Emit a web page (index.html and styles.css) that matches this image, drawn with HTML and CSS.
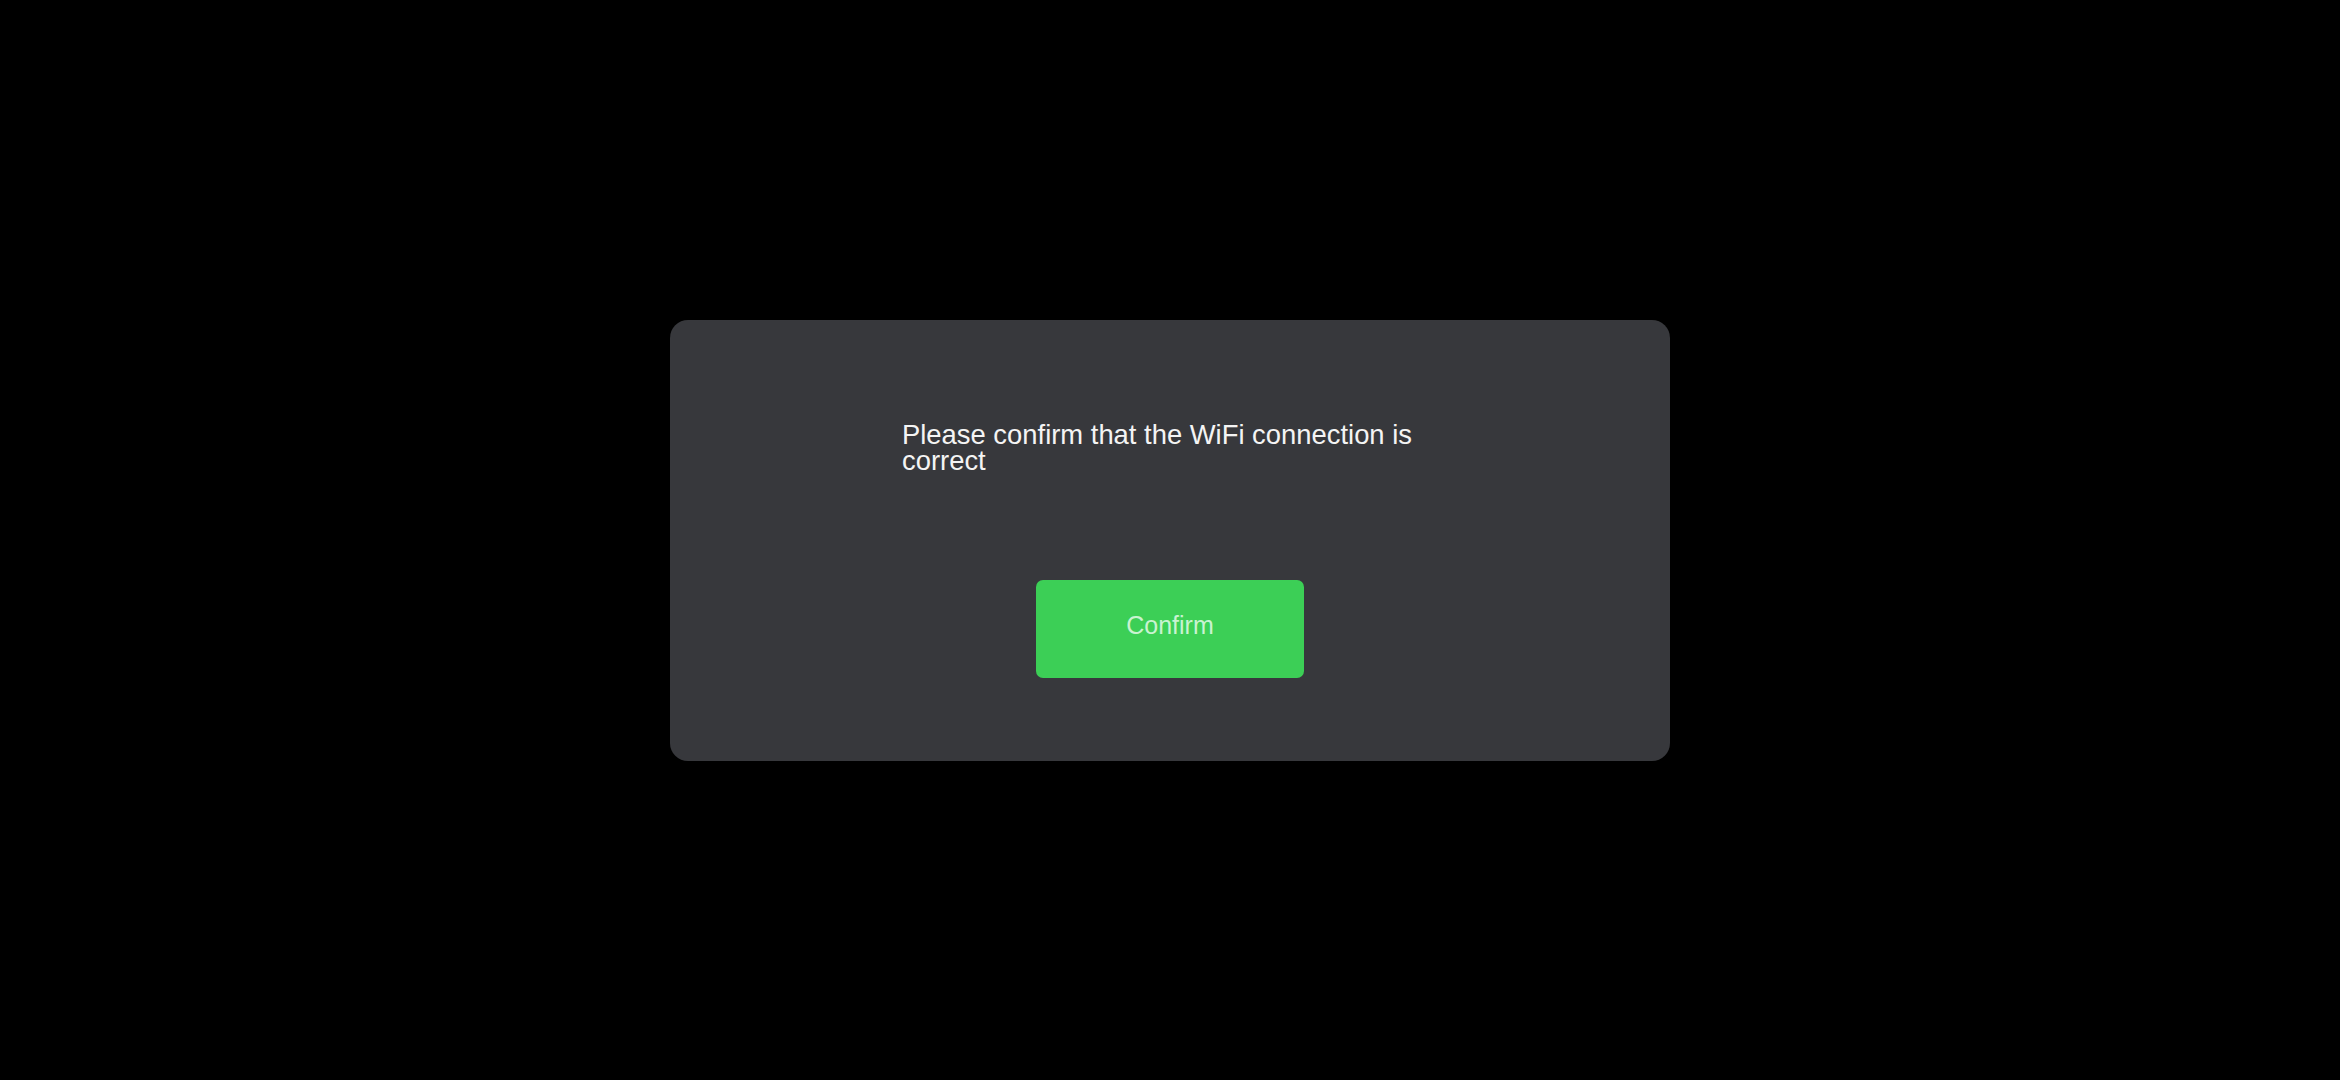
FILE: index.html
```html
<!DOCTYPE html>
<html lang="en">
<head>
<meta charset="utf-8">
<title>WiFi confirmation</title>
<link rel="stylesheet" href="styles.css">
</head>
<body>
<div class="screen">
  <div class="dialog">
    <p class="message">Please confirm that the WiFi connection is correct</p>
    <button class="confirm-btn" type="button">Confirm</button>
  </div>
</div>
</body>
</html>
```
FILE: styles.css
```css
html, body {
  margin: 0;
  padding: 0;
  background: #000;
  height: 100%;
}
.screen {
  width: 100%;
  height: 100%;
  display: flex;
  align-items: center;
  justify-content: center;
  font-family: "Liberation Sans", Arial, sans-serif;
}
.dialog {
  box-sizing: border-box;
  width: 1000px;
  height: 441px;
  background: #37383c;
  border-radius: 18px;
  display: flex;
  flex-direction: column;
  align-items: center;
  padding-top: 102px;
}
.message {
  margin: 0;
  width: 536px;
  color: #f4f4f4;
  font-size: 27.4px;
  line-height: 26px;
  text-align: left;
}
.confirm-btn {
  margin-top: 106px;
  width: 268px;
  height: 98px;
  border: none;
  border-radius: 7px;
  background: #3ccf56;
  color: #c9f3d1;
  font-family: "Liberation Sans", Arial, sans-serif;
  font-size: 25px;
  padding: 0 0 6px 0;
  cursor: pointer;
}
```
